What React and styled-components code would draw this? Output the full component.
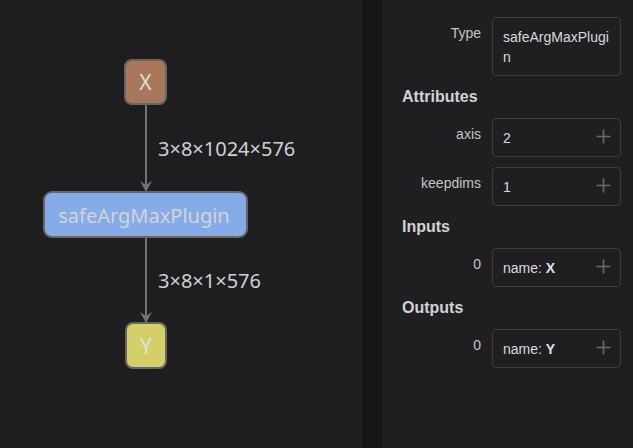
import React from "react";
import styled, { createGlobalStyle } from "styled-components";

const Global = createGlobalStyle`
  html, body { margin: 0; padding: 0; background: #1e1e20; }
  #root { width: 633px; height: 448px; }
`;

const Page = styled.div`
  display: flex;
  width: 633px;
  height: 448px;
  overflow: hidden;
  background: #1e1e20;
`;

const Canvas = styled.div`
  width: 362px;
  height: 448px;
  flex: none;
  background: #1e1e20;
`;

const Divider = styled.div`
  width: 20px;
  flex: none;
  background: #161618;
`;

const Sidebar = styled.div`
  flex: 1;
  background: #1f1f21;
  padding: 17px 12px 0 20px;
  font-family: "Liberation Sans", Arial, sans-serif;
  font-size: 14px;
  color: #cfcfcf;
  box-sizing: border-box;
`;

const Row = styled.div`
  display: grid;
  grid-template-columns: 79px 129px;
  column-gap: 11px;
  margin-bottom: 10px;
`;

const Label = styled.div`
  text-align: right;
  line-height: 20px;
  padding-top: 6px;
  color: #c4c4c4;
`;

const ValueBox = styled.div`
  position: relative;
  border: 1px solid #3c3c3e;
  border-radius: 4px;
  padding: 9px 10px 8px 10px;
  line-height: 20px;
  color: #dadada;
  word-break: break-all;
  box-sizing: border-box;
  padding-right: ${(p) => (p.$expand ? "30px" : "10px")};
`;

const Strong = styled.b`
  font-weight: bold;
  color: #e0e0e0;
`;

const Header = styled.div`
  font-size: 16px;
  font-weight: bold;
  line-height: 21px;
  color: #d2d2d2;
  margin-bottom: 11px;
`;

const PlusIcon = styled.svg`
  position: absolute;
  right: 9px;
  top: 10px;
`;

const Plus = () => (
  <PlusIcon width="15" height="15" viewBox="0 0 15 15">
    <path d="M7.5 0.5 V14.5 M0.5 7.5 H14.5" stroke="#6a6a6c" strokeWidth="1.6" fill="none" />
  </PlusIcon>
);

const Prop = ({ label, children, expand }) => (
  <Row>
    <Label>{label}</Label>
    <ValueBox $expand={expand}>
      {children}
      {expand && <Plus />}
    </ValueBox>
  </Row>
);

const GraphSvg = styled.svg`
  display: block;
  font-family: "Noto Sans", "Open Sans", sans-serif;
`;

const Arrow = ({ x, y1, y2 }) => (
  <g>
    <line x1={x} y1={y1} x2={x} y2={y2 - 4} stroke="#737373" strokeWidth="2" />
    <path d={`M${x - 6} ${y2 - 11} L${x} ${y2} L${x + 6} ${y2 - 11} L${x} ${y2 - 7} Z`} fill="#737373" />
  </g>
);

const Graph = () => (
  <GraphSvg width="362" height="448" viewBox="0 0 362 448">
    <Arrow x={146} y1={104} y2={192} />
    <Arrow x={146} y1={237} y2={323} />
    <rect x="125" y="60" width="41" height="44" rx="7" fill="#a97759" stroke="#666" strokeWidth="2" />
    <text x="145.5" y="90" textAnchor="middle" fontSize="21" fill="#dedede">X</text>
    <rect x="44" y="192" width="203" height="45" rx="8" fill="#85abe9" stroke="#666" strokeWidth="2" />
    <text x="144" y="222.5" textAnchor="middle" fontSize="20" fill="#d4d4d4">safeArgMaxPlugin</text>
    <rect x="126" y="323" width="40" height="45" rx="7" fill="#d4cf69" stroke="#666" strokeWidth="2" />
    <text x="146" y="353.5" textAnchor="middle" fontSize="21" fill="#e0e0e0">Y</text>
    <text x="158" y="155.5" fontSize="20" fill="#d0d0d0">3×8×1024×576</text>
    <text x="158" y="287.5" fontSize="20" fill="#d0d0d0">3×8×1×576</text>
  </GraphSvg>
);

export default function App() {
  return (
    <Page>
      <Global />
      <Canvas>
        <Graph />
      </Canvas>
      <Divider />
      <Sidebar>
        <Prop label="Type">safeArgMaxPlugin</Prop>
        <Header>Attributes</Header>
        <Prop label="axis" expand>2</Prop>
        <Prop label="keepdims" expand>1</Prop>
        <Header>Inputs</Header>
        <Prop label="0" expand>
          name: <Strong>X</Strong>
        </Prop>
        <Header>Outputs</Header>
        <Prop label="0" expand>
          name: <Strong>Y</Strong>
        </Prop>
      </Sidebar>
    </Page>
  );
}
